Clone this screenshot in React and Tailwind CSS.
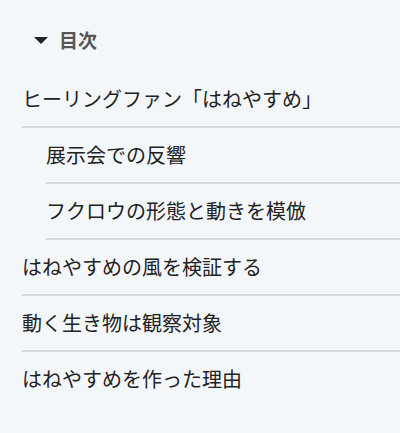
export default function App() {
  const font = { fontFamily: '"Noto Sans CJK JP", "Noto Sans", sans-serif' };
  return (
    <div className="min-h-[433px] w-[400px] bg-[#f4f7fa] pl-[22px] pt-[25px]" style={font}>
      <div className="flex items-center pl-[12px] h-[30px]">
        <svg width="14" height="7" viewBox="0 0 14 7" className="mr-[11px]">
          <polygon points="0,0 14,0 7,7" fill="#222" />
        </svg>
        <span className="text-[19px] font-bold text-[#555] leading-[30px]">目次</span>
      </div>
      <ul className="mt-[17px] text-[20px] leading-[30px] text-[#222]">
        <li>
          <div className="py-3 border-b-2 border-[#d5d8dc]">ヒーリングファン「はねやすめ」</div>
          <ul className="pl-6">
            <li className="py-3 border-b-2 border-[#d5d8dc]">展示会での反響</li>
            <li className="py-3 border-b-2 border-[#d5d8dc]">フクロウの形態と動きを模倣</li>
          </ul>
        </li>
        <li className="py-3 border-b-2 border-[#d5d8dc]">はねやすめの風を検証する</li>
        <li className="py-3 border-b-2 border-[#d5d8dc]">動く生き物は観察対象</li>
        <li className="py-3">はねやすめを作った理由</li>
      </ul>
    </div>
  );
}
